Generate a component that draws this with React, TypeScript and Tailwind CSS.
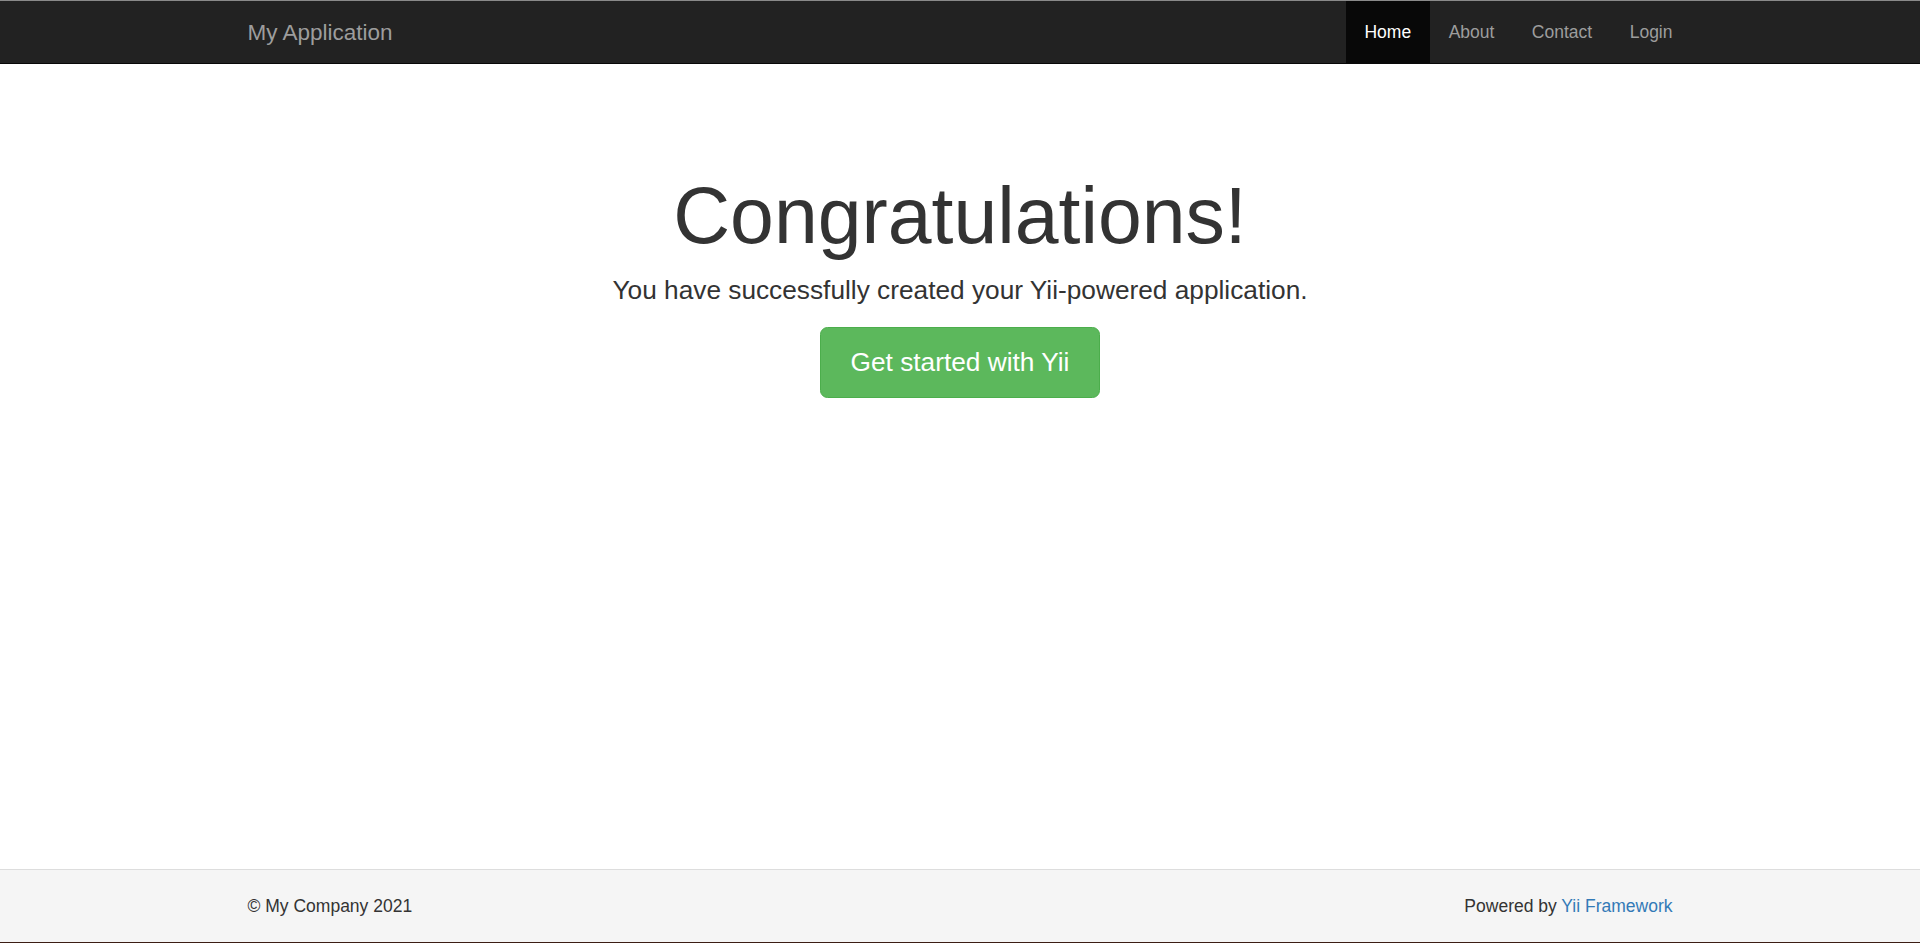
import React from 'react';

const navItems = [
  { label: 'Home', active: true },
  { label: 'About', active: false },
  { label: 'Contact', active: false },
  { label: 'Login', active: false },
];

const Navbar: React.FC = (): JSX.Element => {
  return (
    <nav className="h-[63px] bg-[#222222] border-b border-[#080808]">
      <div className="mx-auto flex h-full w-[1462.5px] items-stretch justify-between px-[18.75px]">
        <a className="-ml-[18.75px] flex items-center px-[18.75px] text-[22.5px] leading-[25px] text-[#9d9d9d]">
          My Application
        </a>
        <ul className="-mr-[18.75px] flex items-stretch">
          {navItems.map((item) => (
            <li key={item.label} className="flex">
              <a
                className={
                  item.active
                    ? 'flex items-center bg-[#080808] px-[18.75px] text-[17.5px] leading-[25px] text-white'
                    : 'flex items-center px-[18.75px] text-[17.5px] leading-[25px] text-[#9d9d9d]'
                }
              >
                {item.label}
              </a>
            </li>
          ))}
        </ul>
      </div>
    </nav>
  );
};

const Jumbotron: React.FC = (): JSX.Element => {
  return (
    <div className="mx-auto w-[1462.5px] px-[18.75px] pt-[108.75px] text-center text-[#333333]">
      <h1 className="mb-[12.5px] text-[78.75px] leading-[1.1] font-normal">Congratulations!</h1>
      <p className="mb-[18px] text-[26.25px] leading-[37.5px]">
        You have successfully created your Yii-powered application.
      </p>
      <p>
        <a className="inline-block rounded-[7.5px] border border-[#4cae4c] bg-[#5cb85c] px-[30px] py-[17px] text-[26.25px] leading-[35px] text-white">
          Get started with Yii
        </a>
      </p>
    </div>
  );
};

const Footer: React.FC = (): JSX.Element => {
  return (
    <footer className="h-[73px] border-t border-[#dddddd] bg-[#f5f5f5] pt-[24px]">
      <div className="mx-auto flex w-[1462.5px] justify-between px-[18.75px] text-[17.5px] leading-[25px] text-[#333333]">
        <p>© My Company 2021</p>
        <p>
          Powered by <a className="text-[#337ab7]">Yii Framework</a>
        </p>
      </div>
    </footer>
  );
};

export default function App(): JSX.Element {
  return (
    <div className="flex h-[943px] flex-col border-t border-b border-t-[#8a8a8a] border-b-[#3b1d14] bg-white font-['Liberation_Sans',Arial,sans-serif]">
      <Navbar />
      <main className="flex-1">
        <Jumbotron />
      </main>
      <Footer />
    </div>
  );
}
